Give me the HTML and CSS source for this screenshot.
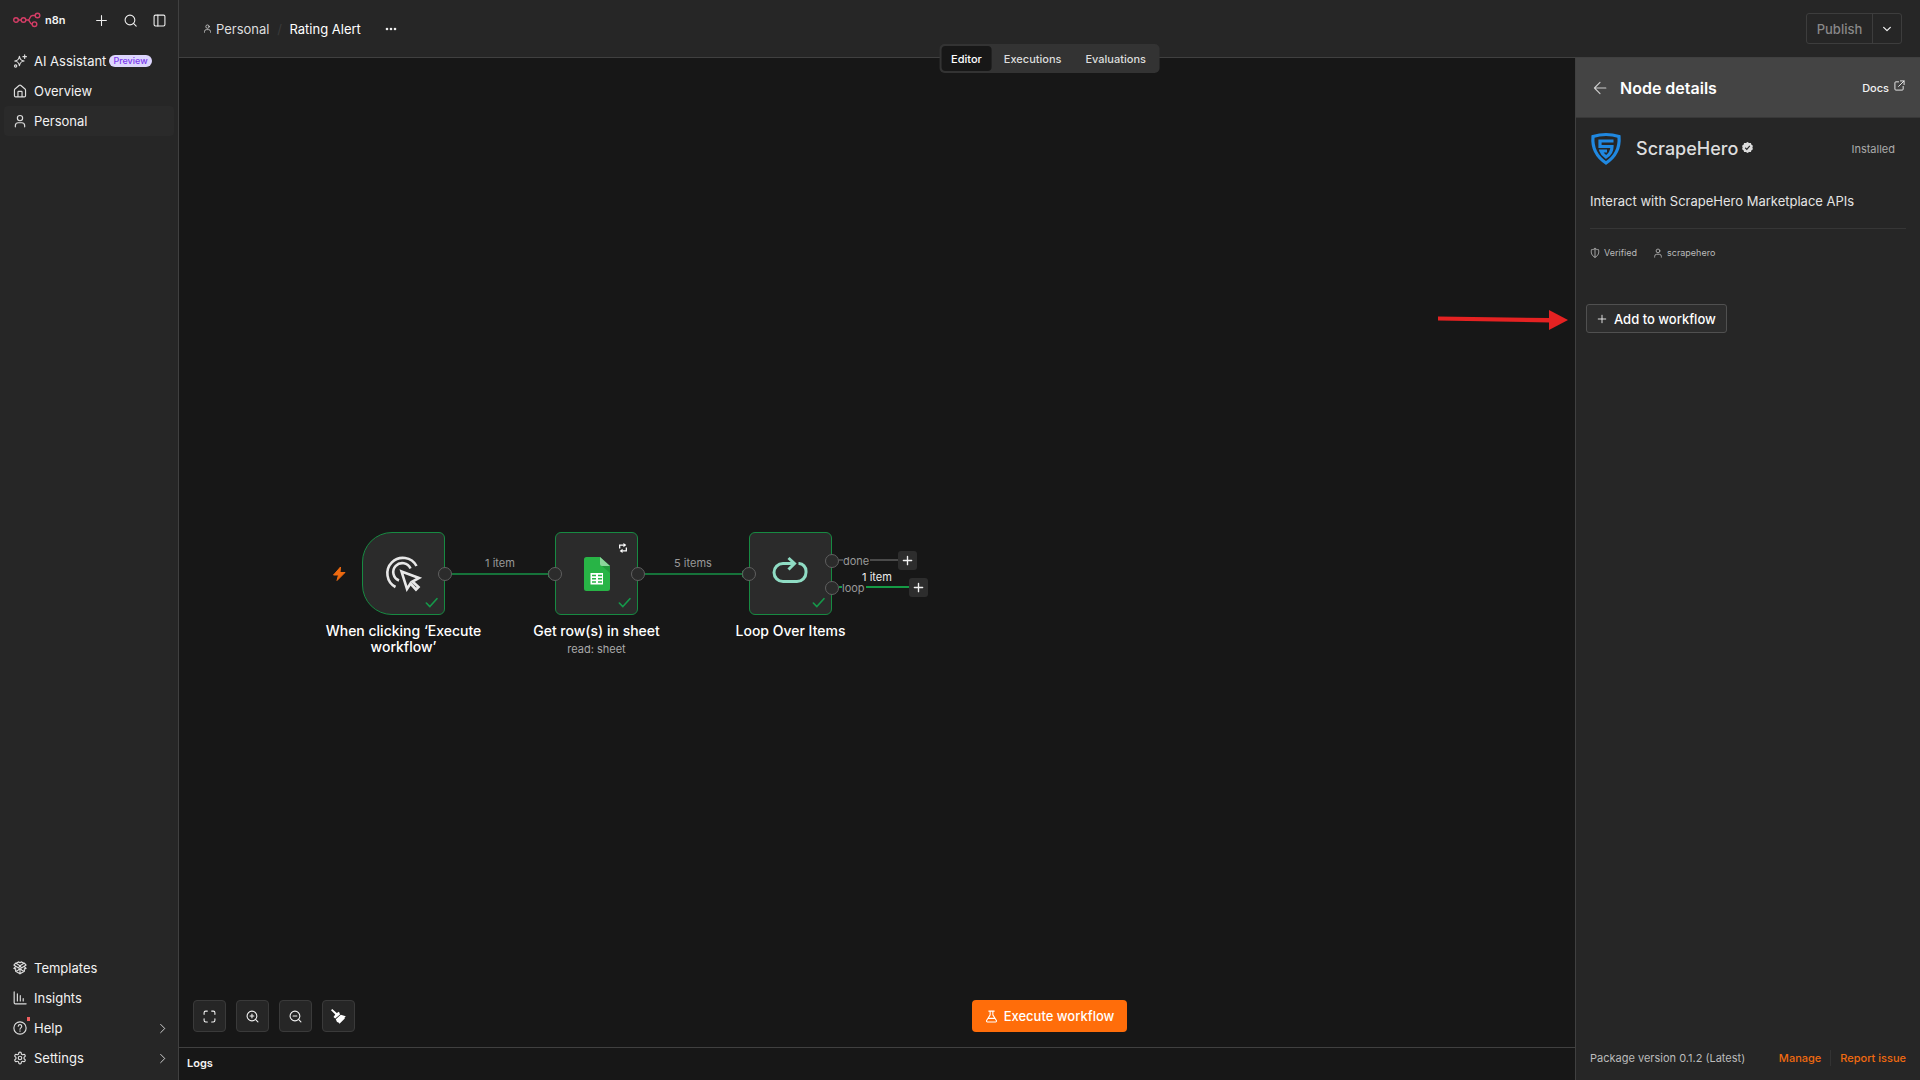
FILE: index.html
```html
<!DOCTYPE html>
<html lang="en">
<head>
<meta charset="utf-8">
<title>Rating Alert - n8n</title>
<link rel="stylesheet" href="styles.css">
</head>
<body>
<svg class="sprite" aria-hidden="true">
  <symbol id="user" viewBox="0 0 24 24"><circle cx="12" cy="7" r="4.500"/><path d="M4 22v-2a5 5 0 0 1 5-5h6a5 5 0 0 1 5 5v2"/></symbol>
  <symbol id="plus" viewBox="0 0 24 24"><path d="M3 12h18M12 3v18"/></symbol>
  <symbol id="chevron" viewBox="0 0 24 24"><path d="m8 3 9 9-9 9"/></symbol>
  <symbol id="check" viewBox="0 0 24 24"><path d="m2.500 13 6.500 6.500L22 5"/></symbol>
</svg>
<div class="app">
  <nav class="sidebar">
    <div class="brand">
      <svg class="brand-logo" viewBox="0 0 28 16"><circle cx="3" cy="8" r="2.300"/><circle cx="10.500" cy="8" r="2.300"/><circle cx="24.500" cy="3.500" r="2.300"/><circle cx="21.500" cy="12.200" r="2.300"/><path d="M5.300 8h2.900M12.800 8h2.200c2.500 0 1.200-4.500 4.500-4.500h2.700M15 8c2.200 0 1.500 4.200 4.200 4.200"/></svg>
      <span class="brand-name">n8n</span>
      <button class="icon-button" aria-label="Create"><svg class="icon"><use href="#plus"/></svg></button>
      <button class="icon-button" aria-label="Search"><svg class="icon" viewBox="0 0 24 24"><circle cx="11" cy="11" r="9"/><path d="m17.500 17.500 5 5"/></svg></button>
      <button class="icon-button" aria-label="Toggle sidebar"><svg class="icon" viewBox="0 0 24 24"><rect x="2" y="2" width="20" height="20" rx="2.500"/><path d="M9 2v20"/></svg></button>
    </div>
    <div class="menu">
      <a class="menu-item" href="#assistant"><svg class="icon" viewBox="0 0 24 24"><path d="M11 4c1 5.500 2.500 7 8 8-5.500 1-7 2.500-8 8-1-5.500-2.500-7-8-8 5.500-1 7-2.500 8-8zM20 1.500v6M17 4.500h6"/><circle cx="4.500" cy="20.500" r="2"/></svg>AI Assistant<span class="badge">Preview</span></a>
      <a class="menu-item" href="#overview"><svg class="icon" viewBox="0 0 24 24"><path d="M2.500 10.500c0-.8.300-1.400.900-1.900l7-6c1-.8 2.200-.8 3.200 0l7 6c.6.500.9 1.100.9 1.900V20a2 2 0 0 1-2 2h-15a2 2 0 0 1-2-2zM8.500 22v-8.500a1 1 0 0 1 1-1h5a1 1 0 0 1 1 1V22"/></svg>Overview</a>
      <a class="menu-item active" href="#personal"><svg class="icon"><use href="#user"/></svg>Personal</a>
    </div>
    <div class="menu menu-bottom">
      <a class="menu-item" href="#templates"><svg class="icon" viewBox="0 0 24 24"><path d="M12 13v9l-7.500-4.500V13M12 22l7.500-4.500V13M12 8 4.500 3.500 1.500 7 9.500 12zM12 8l7.500-4.500 3 3.500-8 5zM1.500 12.500l6.500 4 4-4 4 4 6.500-4-3-3M4.500 9.500l-3 3M6 3.500l4-2 2 1.500 2-1.500 4 2"/></svg>Templates</a>
      <a class="menu-item" href="#insights"><svg class="icon" viewBox="0 0 24 24"><path d="M2 1.500V20a2 2 0 0 0 2 2h18.500M7.500 5v12M12.500 8v9M17.500 13v4"/></svg>Insights</a>
      <a class="menu-item" href="#help"><span class="help-icon"><svg class="icon" viewBox="0 0 24 24"><circle cx="12" cy="12" r="10.500"/><path d="M9 9a3 3 0 0 1 6 .5c0 2-3 2.500-3 4.500M12 17v.6"/></svg></span>Help<svg class="icon arrow"><use href="#chevron"/></svg></a>
      <a class="menu-item" href="#settings"><svg class="icon" viewBox="0 0 24 24"><path d="M12.220 2h-.44a2 2 0 0 0-2 2v.18a2 2 0 0 1-1 1.730l-.43.250a2 2 0 0 1-2 0l-.15-.08a2 2 0 0 0-2.730.730l-.22.380a2 2 0 0 0 .730 2.730l.150.100a2 2 0 0 1 1 1.720v.510a2 2 0 0 1-1 1.740l-.15.090a2 2 0 0 0-.73 2.730l.220.380a2 2 0 0 0 2.730.730l.150-.08a2 2 0 0 1 2 0l.430.250a2 2 0 0 1 1 1.730V20a2 2 0 0 0 2 2h.440a2 2 0 0 0 2-2v-.18a2 2 0 0 1 1-1.730l.430-.25a2 2 0 0 1 2 0l.150.080a2 2 0 0 0 2.730-.73l.220-.39a2 2 0 0 0-.73-2.730l-.15-.08a2 2 0 0 1-1-1.740v-.5a2 2 0 0 1 1-1.740l.150-.09a2 2 0 0 0 .730-2.730l-.22-.38a2 2 0 0 0-2.730-.73l-.15.080a2 2 0 0 1-2 0l-.43-.25a2 2 0 0 1-1-1.730V4a2 2 0 0 0-2-2z"/><circle cx="12" cy="12" r="3"/></svg>Settings<svg class="icon arrow"><use href="#chevron"/></svg></a>
    </div>
  </nav>

  <main class="main">
    <header class="topbar">
      <a class="crumb" href="#personal"><svg class="icon crumb-icon"><use href="#user"/></svg>Personal</a>
      <span class="slash">/</span>
      <a class="crumb current" href="#workflow">Rating Alert</a>
      <button class="icon-button more" aria-label="More actions"><svg class="dots" viewBox="0 0 12 4"><circle cx="2" cy="2" r="1.300"/><circle cx="6" cy="2" r="1.300"/><circle cx="10" cy="2" r="1.300"/></svg></button>
      <div class="publish">
        <button class="publish-main" disabled>Publish</button>
        <button class="publish-more" aria-label="Publish options"><svg class="icon" viewBox="0 0 24 24"><path d="m4 8 8 8 8-8"/></svg></button>
      </div>
      <div class="tabs">
        <button class="tab selected">Editor</button>
        <button class="tab">Executions</button>
        <button class="tab">Evaluations</button>
      </div>
    </header>

    <div class="workspace">
      <section class="editor">
        <div class="canvas">
          <svg class="edges" viewBox="0 0 800 600">
            <path class="run" d="M273 516h97M466 516h98"/>
            <path class="tip" d="M369 512.500l6 3.500-6 3.500zM563 512.500l6 3.500-6 3.500z"/>
            <path class="idle" d="M660 502h60"/>
            <path class="run strong" d="M660 529h72"/>
            <path class="bolt" d="M162.500 509l-7 8h5l-1.500 5.500 8-8h-5z"/>
          </svg>
          <span class="edge-label first">1 item</span>
          <span class="edge-label second">5 items</span>
          <span class="edge-label bright">1 item</span>

          <div class="node trigger">
            <svg class="pointer" viewBox="1 1 34 34"><path d="M9.500 31A15.500 15.500 0 1 1 30.500 10M13 24.500A9 9 0 1 1 24.500 12.500"/><path d="M15.500 15.500l17.500 6.500-6.500 3.500 6 5.500-2.500 2.500-5.500-6-3.500 5.500z"/></svg>
            <svg class="icon done-mark"><use href="#check"/></svg>
            <i class="port right"></i>
            <div class="caption">When clicking ‘Execute workflow’</div>
          </div>
          <div class="node sheet">
            <svg class="sheet-icon" viewBox="0 0 26 34"><path fill="#28b446" d="M2.500 0H16l10 9v22.500a2.500 2.500 0 0 1-2.500 2.500h-21A2.500 2.500 0 0 1 0 31.500v-29A2.500 2.500 0 0 1 2.500 0z"/><path fill="#8bd69b" d="M16 0l10 9h-8a2 2 0 0 1-2-2z"/><path fill="#219b3c" d="M18 9h8v7z"/><path fill="#fff" d="M6.500 16h12.500v11.500h-12.500z"/><path fill="none" stroke="#28b446" d="M8 18.500h4M14 18.500h4M8 21.700h4M14 21.700h4M8 25h4M14 25h4" stroke-width="1.600"/></svg>
            <svg class="retry" viewBox="0 0 24 24"><path d="M4 13V5h10M20 11v8H10"/><path class="solid" d="M13 0l7 5-7 5zM11 14l-7 5 7 5z"/></svg>
            <svg class="icon done-mark"><use href="#check"/></svg>
            <i class="port left"></i><i class="port right"></i>
            <div class="caption">Get row(s) in sheet<small>read: sheet</small></div>
          </div>
          <div class="node loop">
            <svg class="loop-icon" viewBox="1 1 36 26"><path d="M26.500 6.500h.5a7.500 7.500 0 0 1 7 7.500v1.500a9 9 0 0 1-9 9H11a9 9 0 0 1-9-9V15.500a9 9 0 0 1 9-9h11M16.500 1l6 5.500-6 6"/></svg>
            <svg class="icon done-mark"><use href="#check"/></svg>
            <i class="port left"></i><i class="port upper"></i><i class="port lower"></i>
            <div class="caption">Loop Over Items</div>
          </div>
          <span class="port-label done">done</span>
          <span class="port-label again">loop</span>
          <button class="add-node done" aria-label="Add after done"><svg class="icon"><use href="#plus"/></svg></button>
          <button class="add-node again" aria-label="Add after loop"><svg class="icon"><use href="#plus"/></svg></button>

          <div class="canvas-bar">
            <div class="controls">
              <button class="control" aria-label="Fit view"><svg class="icon" viewBox="0 0 24 24"><path d="M2 8V5a3 3 0 0 1 3-3h3M16 2h3a3 3 0 0 1 3 3v3M22 16v3a3 3 0 0 1-3 3h-3M8 22H5a3 3 0 0 1-3-3v-3"/></svg></button>
              <button class="control" aria-label="Zoom in"><svg class="icon" viewBox="0 0 24 24"><circle cx="11" cy="11" r="9"/><path d="m17.500 17.500 4.500 4.500M7.500 11h7M11 7.500v7"/></svg></button>
              <button class="control" aria-label="Zoom out"><svg class="icon" viewBox="0 0 24 24"><circle cx="11" cy="11" r="9"/><path d="m17.500 17.500 4.500 4.500M7.500 11h7"/></svg></button>
              <button class="control" aria-label="Tidy up"><svg class="broom" viewBox="0 0 15 15"><path d="M0 1.200 1.200 0 5.800 4 8 2.800l1 2.700-4.800 4L2.500 8l1.800-2.500z"/><path d="M9.800 5.800 14.800 7.200 13.500 8.800 13.800 9.500 8.500 14.700 7.500 13.500 6 13 4.800 10.200z"/></svg></button>
            </div>
            <button class="execute"><svg class="icon" viewBox="0 0 24 24"><path d="M7 2h10M9.500 2v7L3 19.500A1.700 1.700 0 0 0 4.500 22h15a1.700 1.700 0 0 0 1.500-2.500L14.500 9V2M6 15.500h12"/></svg>Execute workflow</button>
          </div>
        </div>
        <footer class="logs">Logs</footer>
      </section>

      <aside class="details">
        <header class="details-head">
          <button class="icon-button" aria-label="Back"><svg class="icon back" viewBox="0 0 24 24"><path d="M22 12H2.500M12 2.500 2.500 12l9.500 9.500"/></svg></button>
          <h1 class="details-title">Node details</h1>
          <a class="docs" href="#docs">Docs<svg class="icon" viewBox="0 0 24 24"><path d="M14 2h8v8M22 2 10 14M10 4H4a2 2 0 0 0-2 2v14a2 2 0 0 0 2 2h14a2 2 0 0 0 2-2v-6"/></svg></a>
        </header>
        <div class="details-body">
          <div class="package">
            <svg class="shield" viewBox="-1 0 30 32"><path d="M2 3.500Q15-.5 28 3.500C29 15 24 24 15 30 6 24 1 15 2 3.500z"/><path d="M22.500 8H9v5.500h12c0 5-2 8-6 10.500-2.500-1.800-4.200-3.500-5-6h6"/></svg>
            <h2 class="package-name">ScrapeHero</h2>
            <svg class="verified" viewBox="0 0 24 24"><path fill="#ddd" d="M12 0l3.400 2.200 4-.1 1.300 3.900 3.200 2.400L22.700 12l1.200 3.800-3.200 2.400-1.300 3.800-4-.1L12 24l-3.400-2.100-4 .1-1.300-3.800L.1 15.800 1.300 12 .1 8.300l3.200-2.400L4.600 2l4 .2z"/><path fill="none" stroke="#262626" stroke-width="2.500" d="m7 12.500 3.500 3.500L17 8.500"/></svg>
            <span class="installed">Installed</span>
          </div>
          <p class="about">Interact with ScrapeHero Marketplace APIs</p>
          <div class="meta">
            <span class="meta-item"><svg class="icon" viewBox="0 0 24 24"><path d="M12 1.500c3 2 5.500 2.500 8.500 2.500 1.500 7 0 14-8.500 18.500C3.500 18 2 11 3.500 4c3 0 5.500-.5 8.500-2.500zM12 2v20"/></svg>Verified</span>
            <span class="meta-item"><svg class="icon"><use href="#user"/></svg>scrapehero</span>
          </div>
          <div class="action">
            <button class="add"><svg class="icon"><use href="#plus"/></svg>Add to workflow</button>
            <svg class="callout" viewBox="0 0 130 20"><path d="M0 6.500 112 8v4.500L0 10.500z"/><path d="M111 0l19 10-19 10z"/></svg>
          </div>
        </div>
        <footer class="details-foot">
          <span class="version">Package version 0.1.2 (Latest)</span>
          <a class="foot-link" href="#manage">Manage</a>
          <a class="foot-link issue" href="#issue">Report issue</a>
        </footer>
      </aside>
    </div>
  </main>
</div>
</body>
</html>
```
FILE: styles.css
```css
* { box-sizing: border-box; }
body { margin: 0; background: #171717; color: #f2f2f2; font: 13px/16px Inter, "Liberation Sans", sans-serif; }
button { font: inherit; color: inherit; background: none; border: 0; padding: 0; display: flex; align-items: center; justify-content: center; }
a { color: inherit; text-decoration: none; }
h1, h2, p { margin: 0; }
svg { display: block; flex: none; overflow: visible; }
.sprite { position: absolute; width: 0; height: 0; }
.icon { width: 13px; height: 13px; fill: none; stroke: currentColor; stroke-width: 2; stroke-linecap: round; stroke-linejoin: round; }

.app { display: grid; grid-template-columns: 179px 1fr; min-height: 100vh; }

/* Sidebar */
.sidebar { display: flex; flex-direction: column; background: #262626; border-right: 1px solid #404040; padding: 10px 4px 7px; }
.brand { display: flex; align-items: center; height: 20px; padding: 0 2px 0 9px; }
.brand-logo { width: 28px; height: 16px; fill: none; stroke: #d43d66; stroke-width: 1.4; }
.brand-name { flex: 1; margin-left: 4px; font-size: 11px; font-weight: 600; }
.icon-button { color: #eee; }
.brand .icon-button { width: 25px; margin-left: 4px; }
.menu { display: flex; flex-direction: column; margin-top: 16px; }
.menu-bottom { margin-top: auto; }
.menu-item { display: flex; align-items: center; gap: 7px; height: 30px; padding: 0 6px 0 9px; border-radius: 4px; }
.menu-item .icon { color: #ddd; width: 14px; height: 14px; }
.menu-item.active { background: #2a2a2a; }
.badge { margin-left: -4px; padding: 0 4px; border-radius: 6px; background: #ddd6fe; color: #7c3aed; font-size: 9px; line-height: 12px; font-weight: 500; }
.menu-item .arrow { width: 11px; height: 11px; margin-left: auto; }
.help-icon { position: relative; }
.help-icon::after { content: ""; position: absolute; top: -4px; right: -3px; width: 3px; height: 4px; background: #f06060; }

/* Header */
.main { display: flex; flex-direction: column; min-width: 0; }
.topbar { position: relative; z-index: 1; display: flex; align-items: center; height: 58px; padding: 0 18px 0 24px; background: #262626; border-bottom: 1px solid #404040; }
.crumb { display: flex; align-items: center; gap: 4px; color: #ddd; }
.crumb-icon { width: 9px; height: 9px; }
.crumb.current { color: #fff; }
.slash { width: 20px; text-align: center; color: #3a3a3a; }
.more { margin-left: 24px; }
.dots { width: 12px; height: 4px; fill: #eee; }
.publish { display: flex; height: 31px; margin-left: auto; border: 1px solid #3d3d3d; border-radius: 3px; font-weight: 500; }
.publish-main { width: 65px; color: #888; }
.publish-more { width: 29px; border-left: 1px solid #3d3d3d; }
.publish-more .icon { width: 10px; height: 10px; stroke-width: 3; }
.tabs { position: absolute; left: 50%; bottom: -16px; transform: translateX(-50%); display: flex; height: 29px; padding: 2px; border-radius: 5px; background: #333; }
.tab { padding: 0 12px; border-radius: 4px; font-size: 11px; font-weight: 500; color: #ddd; }
.tab.selected { background: #171717; color: #fff; padding: 0 10px; }

/* Canvas */
.workspace { flex: 1; display: grid; }
.editor { grid-area: 1 / 1; display: flex; flex-direction: column; }
.canvas { position: relative; flex: 1; display: flex; flex-direction: column; justify-content: flex-end; min-height: 700px; }
.edges { position: absolute; left: 0; top: 0; width: 800px; height: 600px; fill: none; }
.run { stroke: #16733a; stroke-width: 2; }
.run.strong { stroke: #159a45; }
.idle { stroke: #4a4a4a; stroke-width: 2; }
.tip { fill: #159a45; }
.edges .bolt { fill: #ee6a10; stroke: #ee6a10; stroke-width: 1; stroke-linejoin: round; transform: translateX(-1px); }
.edge-label { position: absolute; width: 60px; text-align: center; font-size: 11px; line-height: 14px; color: #999; }
.edge-label.first { left: 291px; top: 498px; }
.edge-label.second { left: 484px; top: 498px; }
.edge-label.bright { left: 668px; top: 512px; color: #eee; }
.node { position: absolute; top: 474px; width: 83px; height: 83px; display: flex; align-items: center; justify-content: center; border: 1px solid #178a42; border-radius: 6px; background: #2b2b2b; }
.node.trigger { left: 183px; border-radius: 30px 6px 6px 30px; }
.node.sheet { left: 376px; }
.node.loop { left: 570px; }
.pointer { width: 34px; height: 34px; fill: none; stroke: #e8e8e8; stroke-width: 2.6; }
.sheet-icon { width: 26px; height: 34px; }
.retry { position: absolute; top: 10px; right: 9px; width: 10px; height: 10px; fill: none; stroke: #fff; stroke-width: 3; }
.retry .solid { fill: #fff; stroke: none; }
.loop-icon { width: 36px; height: 26px; margin-bottom: 6px; fill: none; stroke: #8fdcc4; stroke-width: 3; }
.node .done-mark { position: absolute; right: 6px; bottom: 5px; color: #15994a; stroke-width: 3; }
.port { position: absolute; top: 34px; width: 14px; height: 14px; border: 1px solid #606060; border-radius: 50%; background: #2b2b2b; }
.port.left { left: -8px; }
.port.right { right: -8px; }
.port.upper { top: 21px; right: -8px; }
.port.lower { top: 48px; right: -8px; }
.port-label { position: absolute; padding-right: 1px; font-size: 11px; line-height: 12px; color: #999; background: #171717; }
.port-label.done { left: 664px; top: 497px; }
.port-label.again { left: 663px; top: 524px; }
.caption { position: absolute; top: 90px; left: 50%; width: 166px; transform: translateX(-50%); text-align: center; font-size: 14px; font-weight: 500; color: #fff; }
.caption small { display: block; margin-top: 2px; font-size: 11px; line-height: 16px; font-weight: 400; color: #aaa; }
.add-node { position: absolute; width: 19px; height: 19px; border-radius: 3px; background: #2d2d2d; }
.add-node .icon { width: 11px; height: 11px; stroke-width: 3; }
.add-node.done { left: 719px; top: 493px; }
.add-node.again { left: 730px; top: 520px; }
.canvas-bar { position: relative; display: grid; grid-template-columns: 1fr auto 1fr; padding: 0 14px 15px; }
.controls { display: flex; gap: 10px; }
.control { width: 33px; height: 32px; border: 1px solid #3a3a3a; border-radius: 4px; background: #262626; }
.broom { width: 15px; height: 15px; fill: #fff; }
.execute { height: 32px; gap: 6px; padding: 0 13px; border-radius: 4px; background: #ff6d0a; font-weight: 500; color: #fff; }
.logs { height: 33px; padding: 7px 8px; border-top: 1px solid #404040; font-size: 11px; font-weight: 600; }

/* Node details */
.details { grid-area: 1 / 1; justify-self: end; z-index: 1; display: flex; flex-direction: column; width: 345px; background: #262626; border-left: 1px solid #404040; }
.details-head { display: flex; align-items: center; height: 60px; padding: 0 15px 0 17px; background: #444; border-bottom: 1px solid #383838; }
.back { width: 14px; height: 14px; color: #ccc; }
.details-title { margin-left: 13px; font-size: 16px; line-height: 20px; font-weight: 600; color: #fff; }
.docs { display: flex; align-items: center; gap: 5px; margin-left: auto; font-size: 11px; font-weight: 500; }
.docs .icon { width: 11px; height: 11px; margin-bottom: 4px; }
.details-body { flex: 1; padding: 15px 14px 0; }
.package { display: flex; align-items: center; height: 32px; padding-right: 11px; }
.shield { width: 30px; height: 32px; fill: none; stroke: #2088e0; stroke-width: 3.2; }
.package-name { margin: 0 4px 0 16px; font-size: 18px; line-height: 24px; font-weight: 500; color: #ddd; }
.verified { width: 11px; height: 11px; margin-bottom: 4px; }
.installed { margin-left: auto; font-size: 11px; color: #aaa; }
.about { padding: 28px 0 18px; border-bottom: 1px solid #363636; line-height: 17px; color: #e4e4e4; }
.meta { display: flex; gap: 16px; padding-top: 17px; font-size: 9px; line-height: 14px; color: #bbb; }
.meta-item { display: flex; align-items: center; gap: 4px; }
.meta .icon { width: 10px; height: 10px; }
.action { position: relative; margin: 44px 0 0 -4px; }
.add { height: 29px; gap: 7px; padding: 0 10px; border: 1px solid #505050; border-radius: 3px; background: #2d2d2d; font-weight: 500; color: #fff; }
.add .icon { width: 10px; height: 10px; }
.callout { position: absolute; right: 100%; top: 6px; width: 130px; height: 20px; margin-right: 18px; fill: #e52222; }
.details-foot { display: flex; align-items: center; height: 44px; padding: 0 14px; font-size: 11px; }
.version { flex: 1; color: #bbb; }
.foot-link { font-weight: 500; color: #f06a10; }
.issue { margin-left: 9px; padding-left: 9px; border-left: 1px solid #333; }
```
